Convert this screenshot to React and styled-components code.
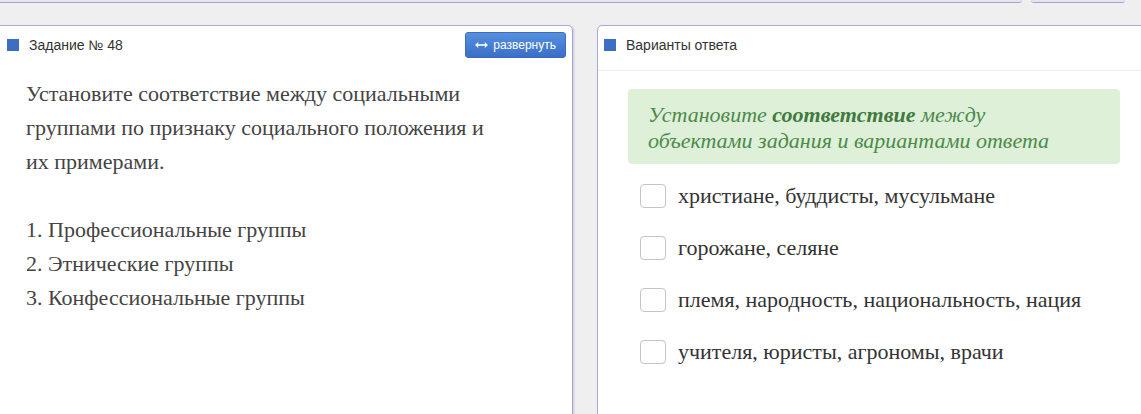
import React from "react";
import styled, { createGlobalStyle } from "styled-components";

const GlobalStyle = createGlobalStyle`
    body {
        margin: 0;
        background: #efefef;
        font-family: 'Liberation Sans', Arial, sans-serif;
        overflow: hidden;
    }
`;

const groups = [
    "1. Профессиональные группы",
    "2. Этнические группы",
    "3. Конфессиональные группы",
];

const answers = [
    "христиане, буддисты, мусульмане",
    "горожане, селяне",
    "племя, народность, национальность, нация",
    "учителя, юристы, агрономы, врачи",
];

const App = () => {
    return (
        <Page>
            <GlobalStyle />
            <TopStrip>
                <TopTab width="1032px" />
                <TopTab width="94px" />
            </TopStrip>
            <Columns>
                <Panel side="left">
                    <Header>
                        <HeaderTitle>
                            <Marker />
                            Задание № 48
                        </HeaderTitle>
                        <ExpandButton>
                            <svg width="13" height="8" viewBox="0 0 13 8">
                                <path d="M1 4h11" stroke="#fff" strokeWidth="1.6" />
                                <path d="M0 4l3.2-3v6z M13 4l-3.2-3v6z" fill="#fff" />
                            </svg>
                            развернуть
                        </ExpandButton>
                    </Header>
                    <TaskBody>
                        <Paragraph>
                            Установите соответствие между социальными группами по признаку
                            социального положения и их примерами.
                        </Paragraph>
                        <Spacer />
                        {groups.map((g) => (
                            <Paragraph key={g}>{g}</Paragraph>
                        ))}
                    </TaskBody>
                </Panel>
                <Panel side="right">
                    <Header bordered>
                        <HeaderTitle>
                            <Marker />
                            Варианты ответа
                        </HeaderTitle>
                    </Header>
                    <AnswersBody>
                        <Hint>
                            Установите <b>соответствие</b> между объектами задания и вариантами ответа
                        </Hint>
                        <OptionList>
                            {answers.map((a) => (
                                <Option key={a}>
                                    <CheckBox />
                                    {a}
                                </Option>
                            ))}
                        </OptionList>
                    </AnswersBody>
                </Panel>
            </Columns>
        </Page>
    );
};

const Page = styled.div`
    width: 1141px;
    height: 414px;
    overflow: hidden;
`;

const TopStrip = styled.div`
    display: flex;
    gap: 9px;
    height: 2px;
    margin-left: -10px;
`;

const TopTab = styled.div`
    width: ${(p) => p.width};
    flex: none;
    height: 2px;
    border-bottom: 1px solid #a3a3d0;
    border-radius: 0 0 4px 4px;
    background: #e4e4ee;
`;

const Columns = styled.div`
    display: flex;
    gap: 24px;
    padding-top: 23px;
`;

const Panel = styled.section`
    flex: none;
    width: ${(p) => (p.side === "left" ? "593px" : "600px")};
    margin-left: ${(p) => (p.side === "left" ? "-20px" : "0")};
    padding-left: ${(p) => (p.side === "left" ? "20px" : "0")};
    height: 420px;
    background: #fff;
    border: 1px solid #a9a9d4;
    border-radius: 5px;
    box-shadow: 1px 1px 2px rgba(120, 120, 180, 0.35);
    box-sizing: border-box;
`;

const Header = styled.div`
    height: 45px;
    display: flex;
    align-items: flex-start;
    justify-content: space-between;
    padding: 6px 6px 0 6px;
    border-bottom: ${(p) => (p.bordered ? "1px solid #ededed" : "none")};
    box-sizing: border-box;
`;

const HeaderTitle = styled.div`
    display: flex;
    align-items: center;
    gap: 10px;
    height: 26px;
    font-size: 14px;
    color: #333;
`;

const Marker = styled.span`
    width: 12px;
    height: 12px;
    background: #3c6ec4;
`;

const ExpandButton = styled.button`
    display: flex;
    align-items: center;
    gap: 5px;
    height: 26px;
    padding: 0 9px;
    border: 1px solid #3c6cbd;
    border-radius: 3px;
    background: linear-gradient(#5690de, #3a6fc8);
    color: #fff;
    font-family: 'Liberation Sans', Arial, sans-serif;
    font-size: 12px;
`;

const TaskBody = styled.div`
    padding: 6px 82px 0 25px;
    font-family: 'Liberation Serif', 'Times New Roman', serif;
    font-size: 22px;
    line-height: 34px;
    color: #444;
`;

const Paragraph = styled.p`
    margin: 0;
`;

const Spacer = styled.div`
    height: 34px;
`;

const AnswersBody = styled.div`
    padding: 18px 0 0 30px;
    width: 492px;
    font-family: 'Liberation Serif', 'Times New Roman', serif;
    font-size: 22px;
    color: #333;
`;

const Hint = styled.div`
    background: #dff0d8;
    border-radius: 4px;
    padding: 13px 50px 10px 20px;
    font-style: italic;
    color: #4c8a4c;
    line-height: 26px;

    b {
        color: #3f7a3f;
    }
`;

const OptionList = styled.div`
    display: flex;
    flex-direction: column;
    gap: 28px;
    padding: 20px 0 0 12px;
`;

const Option = styled.label`
    display: flex;
    align-items: center;
    gap: 12px;
    height: 24px;
    line-height: 24px;
`;

const CheckBox = styled.span`
    width: 24px;
    height: 22px;
    border: 1px solid #c4c4c4;
    border-radius: 4px;
    background: #fff;
    flex: none;
`;

export default App;
